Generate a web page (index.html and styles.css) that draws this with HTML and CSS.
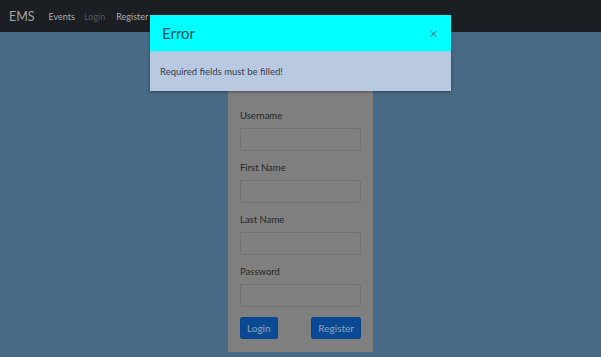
FILE: index.html
```html
<!DOCTYPE html>
<html lang="en">
<head>
    <meta charset="UTF-8">
    <meta name="viewport" content="width=device-width, initial-scale=1.0">
    <title>EMS - Register</title>
    <link rel="stylesheet" href="styles.css">
</head>
<body>
    <nav class="navbar">
        <span class="brand">EMS</span>
        <a class="nav-link" href="#">Events</a>
        <a class="nav-link muted" href="#">Login</a>
        <a class="nav-link" href="#">Register</a>
    </nav>
    <main class="page">
        <div class="card">
            <div class="form-group">
                <label for="username">Username</label>
                <input type="text" id="username">
            </div>
            <div class="form-group">
                <label for="firstName">First Name</label>
                <input type="text" id="firstName">
            </div>
            <div class="form-group">
                <label for="lastName">Last Name</label>
                <input type="text" id="lastName">
            </div>
            <div class="form-group">
                <label for="password">Password</label>
                <input type="password" id="password">
            </div>
            <div class="actions">
                <button>Login</button>
                <button>Register</button>
            </div>
        </div>
    </main>

    <div class="modal">
        <div class="modal-header">
            <h5 class="modal-title">Error</h5>
            <span class="close">&times;</span>
        </div>
        <div class="modal-body">Required fields must be filled!</div>
    </div>
</body>
</html>
```

FILE: styles.css
```css
body {
    font-family: Lato, "Open Sans", sans-serif;
    background-color: #486a84;
    margin: 0;
    height: 357px;
    overflow: hidden;
}
.navbar {
    display: flex;
    align-items: center;
    height: 32px;
    padding: 0 9px;
    background-color: #1b1e23;
}
.brand {
    font-size: 12.5px;
    color: #a2a5a8;
    margin-right: 14px;
}
.nav-link {
    font-size: 9px;
    color: #a9acaf;
    text-decoration: none;
    margin-right: 9px;
}
.nav-link.muted {
    color: #55595d;
    margin-right: 11px;
}
.page {
    display: flex;
    justify-content: center;
    padding-top: 12px;
}
.card {
    width: 145px;
    box-sizing: border-box;
    padding: 64px 12px 13px;
    background-color: #7f7f7f;
}
.form-group {
    margin-bottom: 9px;
}
label {
    display: block;
    font-size: 9.5px;
    line-height: 16px;
    color: #262626;
    margin-bottom: 4px;
}
input {
    display: block;
    width: 100%;
    height: 23px;
    box-sizing: border-box;
    border: 1px solid #727272;
    border-radius: 2px;
    background-color: #808080;
}
.actions {
    display: flex;
    justify-content: space-between;
    margin-top: 10px;
}
button {
    height: 22px;
    padding: 0 6px;
    font-family: inherit;
    font-size: 10px;
    color: #8ea4be;
    background-color: #0a4a94;
    border: 1px solid #09468c;
    border-radius: 2px;
}
.modal {
    position: absolute;
    left: 150px;
    top: 15px;
    width: 301px;
    box-shadow: 0 1px 3px rgba(0, 0, 0, 0.35);
}
.modal-header {
    display: flex;
    justify-content: space-between;
    align-items: center;
    height: 37px;
    padding: 0 13px 0 12px;
    background-color: #00ffff;
    border-bottom: 1px solid #7fd8e0;
    box-sizing: border-box;
}
.modal-title {
    margin: 0;
    font-size: 15px;
    font-weight: normal;
    color: #0b4f5a;
}
.close {
    font-size: 15px;
    color: #3c8e96;
}
.modal-body {
    height: 39px;
    display: flex;
    align-items: center;
    padding: 0 10px;
    font-size: 9.5px;
    color: #34404e;
    background-color: #b8c9e1;
}
```
